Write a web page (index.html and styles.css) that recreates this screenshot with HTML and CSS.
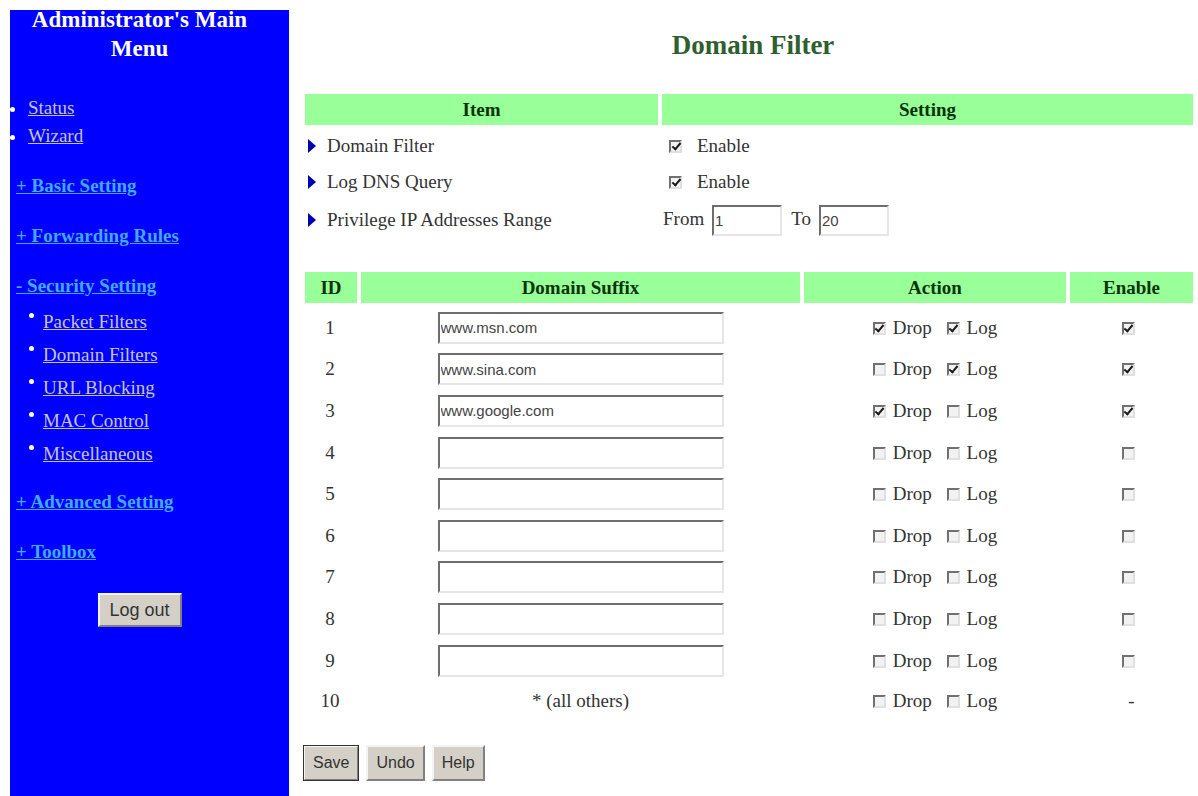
FILE: index.html
```html
<!DOCTYPE html>
<html lang="en">
<head>
    <meta charset="UTF-8">
    <title>Domain Filter</title>
    <link rel="stylesheet" href="styles.css">
</head>
<body>
    <div class="sidebar">
        <h2>Administrator's Main Menu</h2>

        <ul class="top-links">
            <li><a href="#">Status</a></li>
            <li><a href="#">Wizard</a></li>
        </ul>

        <a class="section" href="#">+ Basic Setting</a>
        <a class="section" href="#">+ Forwarding Rules</a>
        <a class="section" href="#">- Security Setting</a>
        <ul class="sub-links">
            <li><a href="#">Packet Filters</a></li>
            <li><a href="#">Domain Filters</a></li>
            <li><a href="#">URL Blocking</a></li>
            <li><a href="#">MAC Control</a></li>
            <li><a href="#">Miscellaneous</a></li>
        </ul>
        <a class="section advanced" href="#">+ Advanced Setting</a>
        <a class="section" href="#">+ Toolbox</a>

        <div class="logout-wrap">
            <button class="btn logout">Log out</button>
        </div>
    </div>

    <div class="main">
        <h1>Domain Filter</h1>

        <table class="grid settings">
            <colgroup>
                <col style="width: 353px">
                <col>
            </colgroup>
            <tr class="head">
                <th>Item</th>
                <th>Setting</th>
            </tr>
            <tr class="r1">
                <td class="label"><span class="arrow"></span>Domain Filter</td>
                <td class="set"><span class="cb on first"></span>Enable</td>
            </tr>
            <tr class="r2">
                <td class="label"><span class="arrow"></span>Log DNS Query</td>
                <td class="set"><span class="cb on first"></span>Enable</td>
            </tr>
            <tr class="r3">
                <td class="label"><span class="arrow"></span>Privilege IP Addresses Range</td>
                <td class="set range">From <input class="txt small" type="text" value="1"> To <input class="txt small" type="text" value="20"></td>
            </tr>
        </table>

        <table class="grid rules">
            <colgroup>
                <col style="width: 52px">
                <col style="width: 439px">
                <col style="width: 262px">
                <col>
            </colgroup>
            <tr class="head">
                <th>ID</th>
                <th>Domain Suffix</th>
                <th>Action</th>
                <th>Enable</th>
            </tr>
            <tr class="first-row">
                <td>1</td>
                <td><input class="txt" type="text" value="www.msn.com"></td>
                <td><span class="cb on"></span>Drop <span class="cb on"></span>Log</td>
                <td><span class="cb on"></span></td>
            </tr>
            <tr>
                <td>2</td>
                <td><input class="txt" type="text" value="www.sina.com"></td>
                <td><span class="cb"></span>Drop <span class="cb on"></span>Log</td>
                <td><span class="cb on"></span></td>
            </tr>
            <tr>
                <td>3</td>
                <td><input class="txt" type="text" value="www.google.com"></td>
                <td><span class="cb on"></span>Drop <span class="cb"></span>Log</td>
                <td><span class="cb on"></span></td>
            </tr>
            <tr>
                <td>4</td>
                <td><input class="txt" type="text"></td>
                <td><span class="cb"></span>Drop <span class="cb"></span>Log</td>
                <td><span class="cb"></span></td>
            </tr>
            <tr>
                <td>5</td>
                <td><input class="txt" type="text"></td>
                <td><span class="cb"></span>Drop <span class="cb"></span>Log</td>
                <td><span class="cb"></span></td>
            </tr>
            <tr>
                <td>6</td>
                <td><input class="txt" type="text"></td>
                <td><span class="cb"></span>Drop <span class="cb"></span>Log</td>
                <td><span class="cb"></span></td>
            </tr>
            <tr>
                <td>7</td>
                <td><input class="txt" type="text"></td>
                <td><span class="cb"></span>Drop <span class="cb"></span>Log</td>
                <td><span class="cb"></span></td>
            </tr>
            <tr>
                <td>8</td>
                <td><input class="txt" type="text"></td>
                <td><span class="cb"></span>Drop <span class="cb"></span>Log</td>
                <td><span class="cb"></span></td>
            </tr>
            <tr>
                <td>9</td>
                <td><input class="txt" type="text"></td>
                <td><span class="cb"></span>Drop <span class="cb"></span>Log</td>
                <td><span class="cb"></span></td>
            </tr>
            <tr class="last">
                <td>10</td>
                <td>* (all others)</td>
                <td><span class="cb"></span>Drop <span class="cb"></span>Log</td>
                <td>-</td>
            </tr>
        </table>

        <div class="actions">
            <button class="btn default">Save</button>
            <button class="btn">Undo</button>
            <button class="btn">Help</button>
        </div>
    </div>
</body>
</html>
```

FILE: styles.css
```css
* {
    margin: 0;
    padding: 0;
    box-sizing: border-box;
}

body {
    font-family: 'Liberation Serif', 'Times New Roman', serif;
    font-size: 19px;
    color: #333;
    background: white;
    display: flex;
    align-items: flex-start;
}

/* left menu */
.sidebar {
    margin: 10px 0 0 10px;
    width: 279px;
    min-height: 786px;
    background: #0000ff;
    padding-right: 20px;
}

.sidebar h2 {
    margin-top: -5px;
    font-size: 23px;
    line-height: 29px;
    color: white;
    text-align: center;
    padding: 0 14px;
}

.sidebar ul {
    list-style: none;
}

.sidebar li {
    line-height: 28px;
    color: white;
}

.sidebar li::before {
    content: "";
    display: inline-block;
    width: 5px;
    height: 5px;
    border-radius: 50%;
    background: white;
    vertical-align: middle;
}

.sidebar li a {
    color: #c4c4cc;
}

.top-links {
    margin-top: 31px;
    padding-left: 18px;
}

.top-links li::before {
    margin-left: -18px;
    margin-right: 13px;
}

.sub-links {
    margin-top: 5px;
    padding-left: 33px;
}

.sub-links li {
    line-height: 33px;
}

.sub-links li::before {
    margin-left: -14px;
    margin-right: 9px;
    vertical-align: 0.55em;
}

.section {
    display: block;
    width: max-content;
    margin: 22px 0 0 6px;
    line-height: 28px;
    font-weight: bold;
    color: #40aaff;
}

.section.advanced {
    margin-top: 18px;
}

.logout-wrap {
    margin-top: 27px;
    text-align: center;
}

/* buttons */
.btn {
    font-family: 'Liberation Sans', Arial, sans-serif;
    font-size: 16px;
    color: #333;
    background: #d4d0c8;
    border: 2px solid;
    border-color: #f4f4f4 #808080 #808080 #f4f4f4;
    padding: 0 8px;
    height: 36px;
    cursor: pointer;
}

.btn.logout {
    width: 84px;
    height: 34px;
    font-size: 18px;
}

.btn.default {
    outline: 1px solid #333;
    outline-offset: -1px;
}

/* content */
.main {
    margin-left: 12px;
    width: 896px;
}

h1 {
    margin-top: 29px;
    font-size: 27px;
    line-height: 32px;
    color: #2f5f2f;
    text-align: center;
    padding-left: 8px;
}

.grid {
    width: 896px;
    table-layout: fixed;
    border-collapse: separate;
    border-spacing: 4px 0;
}

.grid th {
    background: #99ff99;
    color: #0a330a;
    height: 31px;
    font-size: 19px;
}

.settings {
    margin-top: 33px;
}

.settings tr.r1 td {
    height: 39px;
    padding-top: 3px;
}

.settings tr.r2 td {
    height: 36px;
}

.settings tr.r3 td {
    height: 40px;
}

.label {
    padding-left: 3px;
}

.arrow {
    display: inline-block;
    width: 0;
    height: 0;
    border-top: 7px solid transparent;
    border-bottom: 7px solid transparent;
    border-left: 8px solid #0000b0;
    margin-right: 11px;
    vertical-align: -1px;
}

.set {
    padding-left: 1px;
}

.range .txt {
    margin: 0 5px 0 3px;
}

.rules {
    margin-top: 32px;
}

.rules td {
    height: 41.6px;
    text-align: center;
}

.rules tr.first-row td {
    height: 45.6px;
    padding-top: 4px;
}

.rules tr.last td {
    height: 40px;
}

.rules td:first-child {
    padding-right: 2px;
}

/* old style inputs */
.txt {
    width: 286px;
    height: 32px;
    border: 2px solid;
    border-color: #6e6e6e #e6e6e6 #e6e6e6 #6e6e6e;
    font-family: 'Liberation Sans', Arial, sans-serif;
    font-size: 15px;
    color: #444;
    padding: 0 1px;
    vertical-align: middle;
    background: white;
}

.txt.small {
    width: 70px;
    height: 31px;
}

.cb {
    display: inline-block;
    position: relative;
    width: 13px;
    height: 13px;
    border: 2px solid;
    border-color: #707070 #e0e0e0 #e0e0e0 #707070;
    background: #f2f2f2;
    vertical-align: -1px;
    margin: 0 7px 0 0;
}

.cb.first {
    margin: 0 15px 0 6px;
}

.rules td .cb:nth-of-type(2) {
    margin-left: 10px;
}

.cb.on::after {
    content: "";
    position: absolute;
    left: 2.5px;
    top: -1px;
    width: 3px;
    height: 7px;
    border: solid #1a1a1a;
    border-width: 0 2.5px 2.5px 0;
    transform: rotate(40deg);
}

.actions {
    margin: 24px 0 0 2px;
    display: flex;
    gap: 7px;
}
```
